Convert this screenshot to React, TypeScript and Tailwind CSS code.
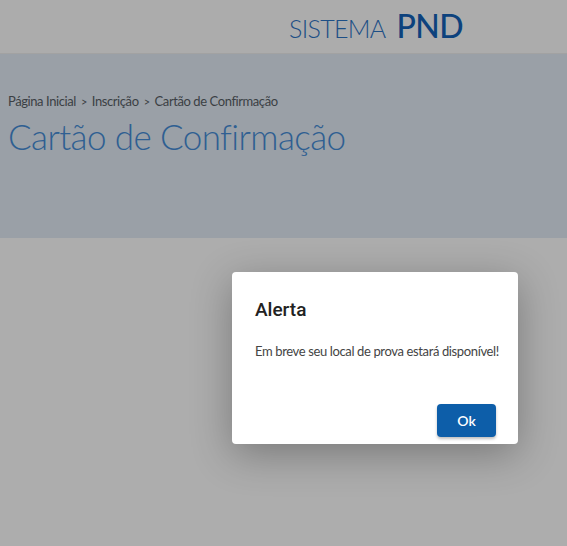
import React from "react";

export default function App() {
  const ss = { fontFamily: "Lato, 'Open Sans', sans-serif" };
  return (
    <div className="relative w-[567px] h-[546px] overflow-hidden bg-[#adadad]" style={ss}>
      <header className="h-[54px] bg-[#acacac] border-b border-[#a2a2a2] flex items-center pl-[289px]">
        <span className="text-[25px] font-light text-[#1d4f86] tracking-[-0.7px] mt-[4px]">SISTEMA</span>
        <span className="text-[32px] font-medium text-[#0d427d] ml-[11px] tracking-[-0.5px] leading-none mt-[-2px]">PND</span>
      </header>
      <section className="h-[184px] bg-[#9aa0a7] px-[8px] pt-[38px]">
        <div className="text-[13px] text-[#3b3f44] flex items-center gap-[5px] tracking-[-0.42px]">
          <span>Página Inicial</span>
          <span className="text-[11px]">&gt;</span>
          <span>Inscrição</span>
          <span className="text-[11px]">&gt;</span>
          <span>Cartão de Confirmação</span>
        </div>
        <h1 className="text-[35px] font-light text-[#2f5f92] leading-[40px] mt-[4px] tracking-[-0.6px]">Cartão de Confirmação</h1>
      </section>
      <div className="absolute left-[232px] top-[272px] w-[286px] h-[172px] bg-white rounded-[4px] shadow-[0_10px_40px_rgba(0,0,0,0.3)] flex flex-col px-[23px]">
        <div className="mt-[24px] text-[19px] font-medium text-[#222]" style={{ fontFamily: "Roboto, sans-serif" }}>Alerta</div>
        <div className="mt-[17px] text-[13px] text-[#444] whitespace-nowrap tracking-[-0.37px]">Em breve seu local de prova estará disponível!</div>
        <div className="flex justify-end mt-auto mb-[7px] mr-[-1px]">
          <button className="w-[59px] h-[33px] rounded-[4px] bg-[#0d5ea9] text-white text-[14px] font-semibold shadow-[0_2px_3px_rgba(0,0,0,0.25)]">Ok</button>
        </div>
      </div>
    </div>
  );
}
